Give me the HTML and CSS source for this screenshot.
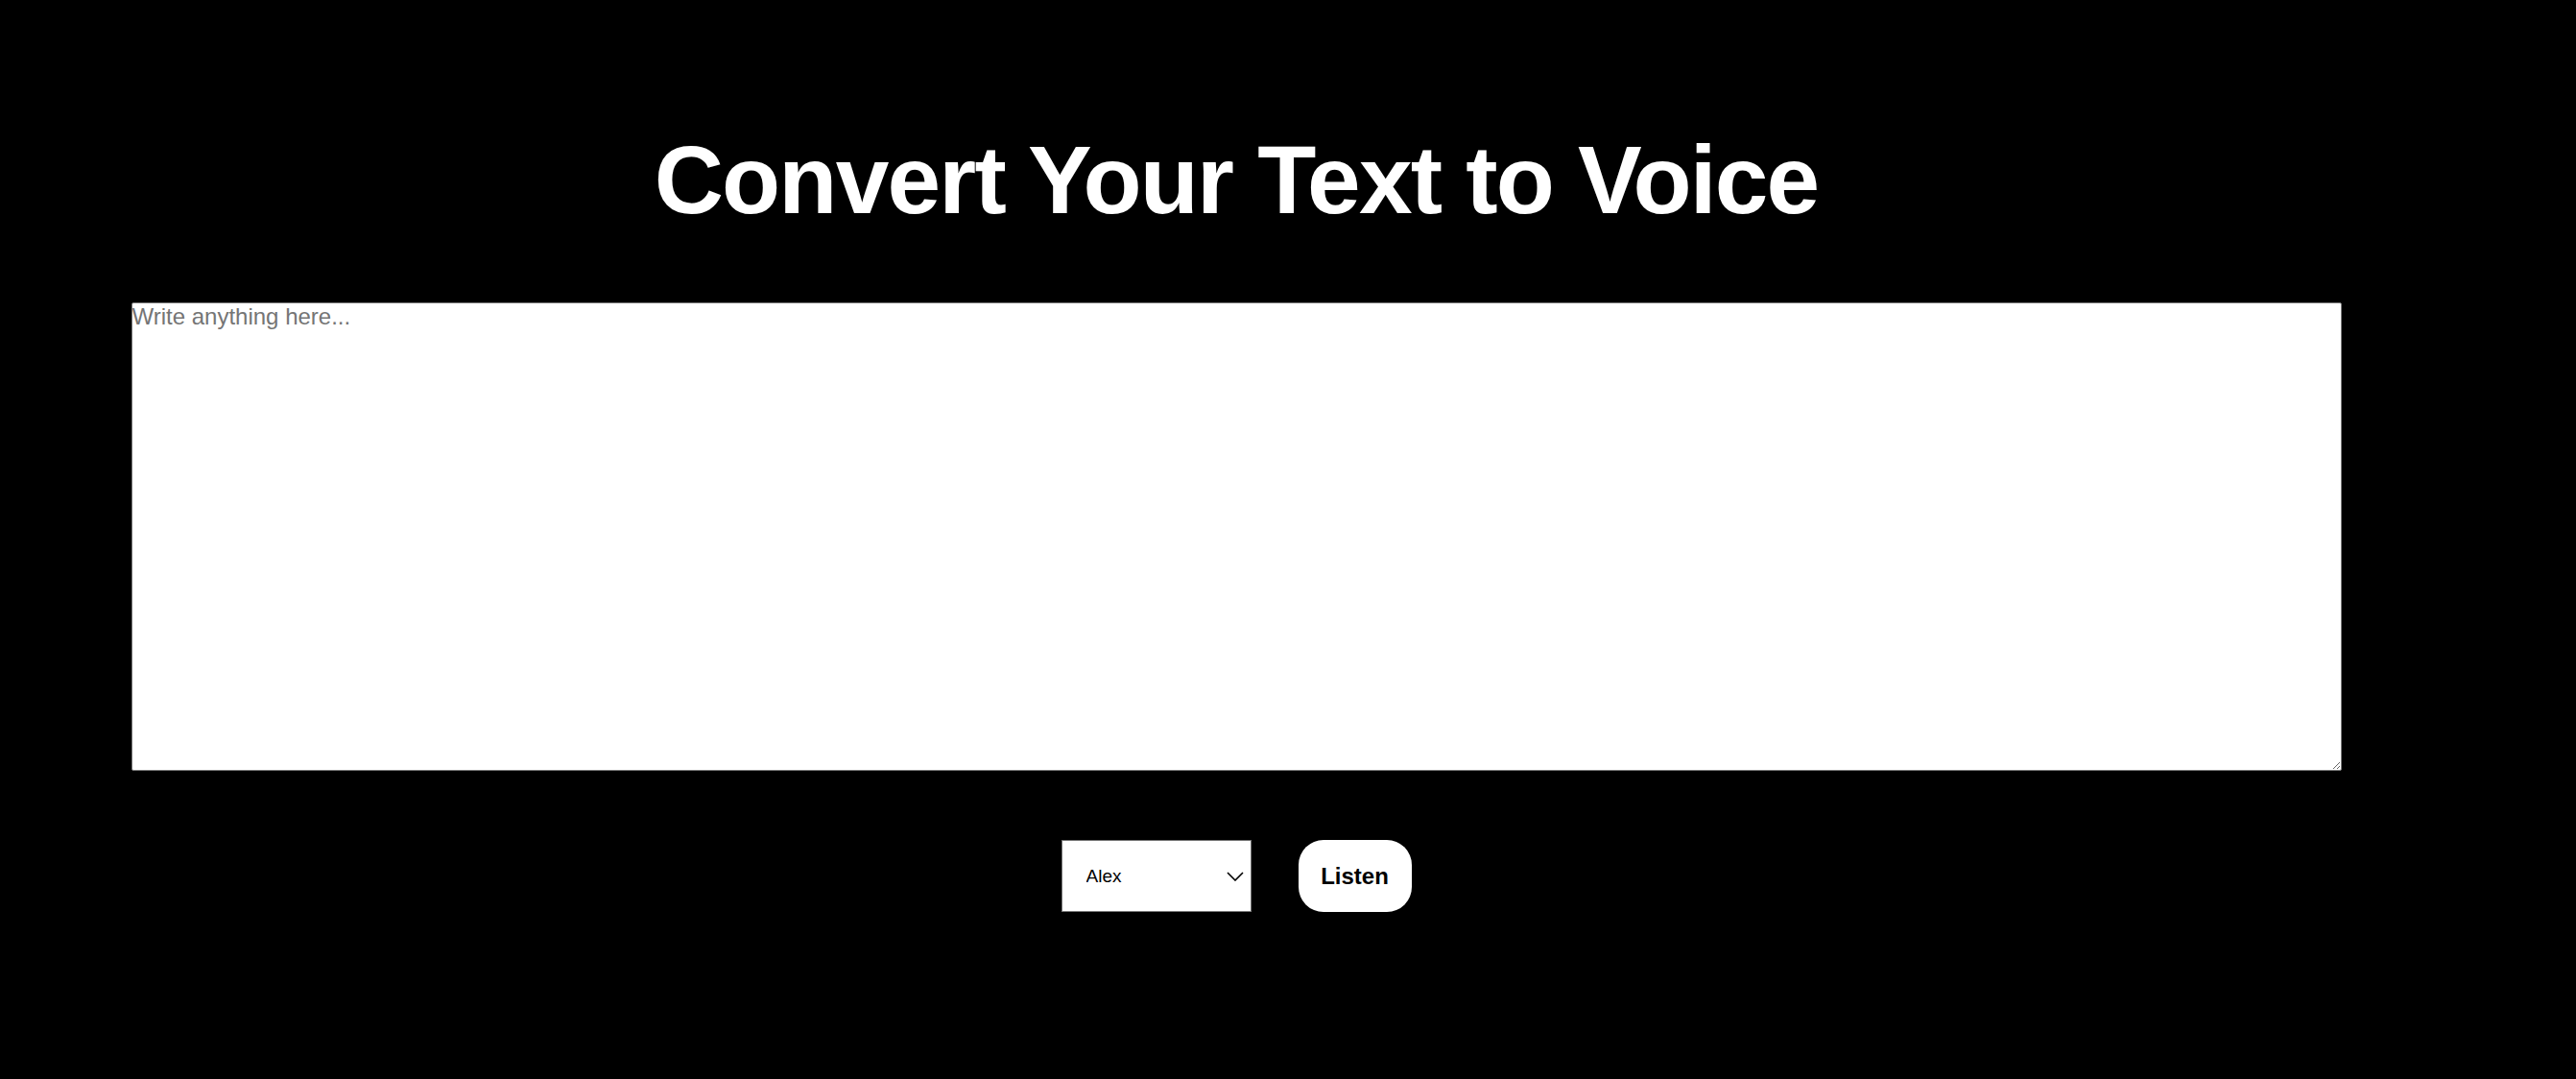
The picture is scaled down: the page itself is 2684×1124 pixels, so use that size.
FILE: index.html
```html
<!DOCTYPE html>
<html lang="en">
<head>
<meta charset="utf-8">
<title>Convert Your Text to Voice</title>
<link rel="stylesheet" href="styles.css">
</head>
<body>
<main class="page">
  <h1 class="title">Convert Your Text to Voice</h1>
  <textarea class="text-input" placeholder="Write anything here..."></textarea>
  <div class="controls">
    <div class="select-wrap">
      <select class="voice-select">
        <option>Alex</option>
      </select>
      <svg class="chevron" viewBox="0 0 18 10" width="18" height="10"><path d="M1 1 L9 9 L17 1" fill="none" stroke="#000" stroke-width="1.6"/></svg>
    </div>
    <button class="listen-btn">Listen</button>
  </div>
</main>
</body>
</html>
```

FILE: styles.css
```css
html, body {
  margin: 0;
  padding: 0;
  background: #000;
}
body {
  font-family: "Liberation Sans", Arial, Helvetica, sans-serif;
  color: #fff;
}
.page {
  width: 2576px;
  display: flex;
  flex-direction: column;
  align-items: center;
  padding-top: 132px;
}
.title {
  margin: 0;
  font-size: 100px;
  font-weight: 700;
  line-height: 110px;
  letter-spacing: -1.8px;
  color: #fff;
}
.text-input {
  box-sizing: border-box;
  margin-top: 73px;
  width: 2303px;
  height: 488px;
  padding: 0;
  border: 1px solid #767676;
  border-radius: 2px;
  background: #fff;
  font-family: "Liberation Sans", Arial, sans-serif;
  font-size: 24px;
  color: #000;
}
.text-input::placeholder {
  color: #757575;
}
.controls {
  margin-top: 72px;
  display: flex;
  gap: 49px;
}
.select-wrap {
  position: relative;
}
.voice-select {
  appearance: none;
  -webkit-appearance: none;
  box-sizing: border-box;
  width: 198px;
  height: 75px;
  padding: 0 0 0 25px;
  border: 1px solid #767676;
  border-radius: 0;
  background: #fff;
  color: #000;
  font-family: "Liberation Sans", Arial, sans-serif;
  font-size: 19px;
}
.chevron {
  position: absolute;
  right: 8px;
  top: 33px;
  pointer-events: none;
}
.listen-btn {
  box-sizing: border-box;
  width: 118px;
  height: 75px;
  padding: 0;
  border: none;
  border-radius: 26px;
  background: #fff;
  color: #000;
  font-family: "Liberation Sans", Arial, sans-serif;
  font-size: 24px;
  font-weight: 700;
}
```
